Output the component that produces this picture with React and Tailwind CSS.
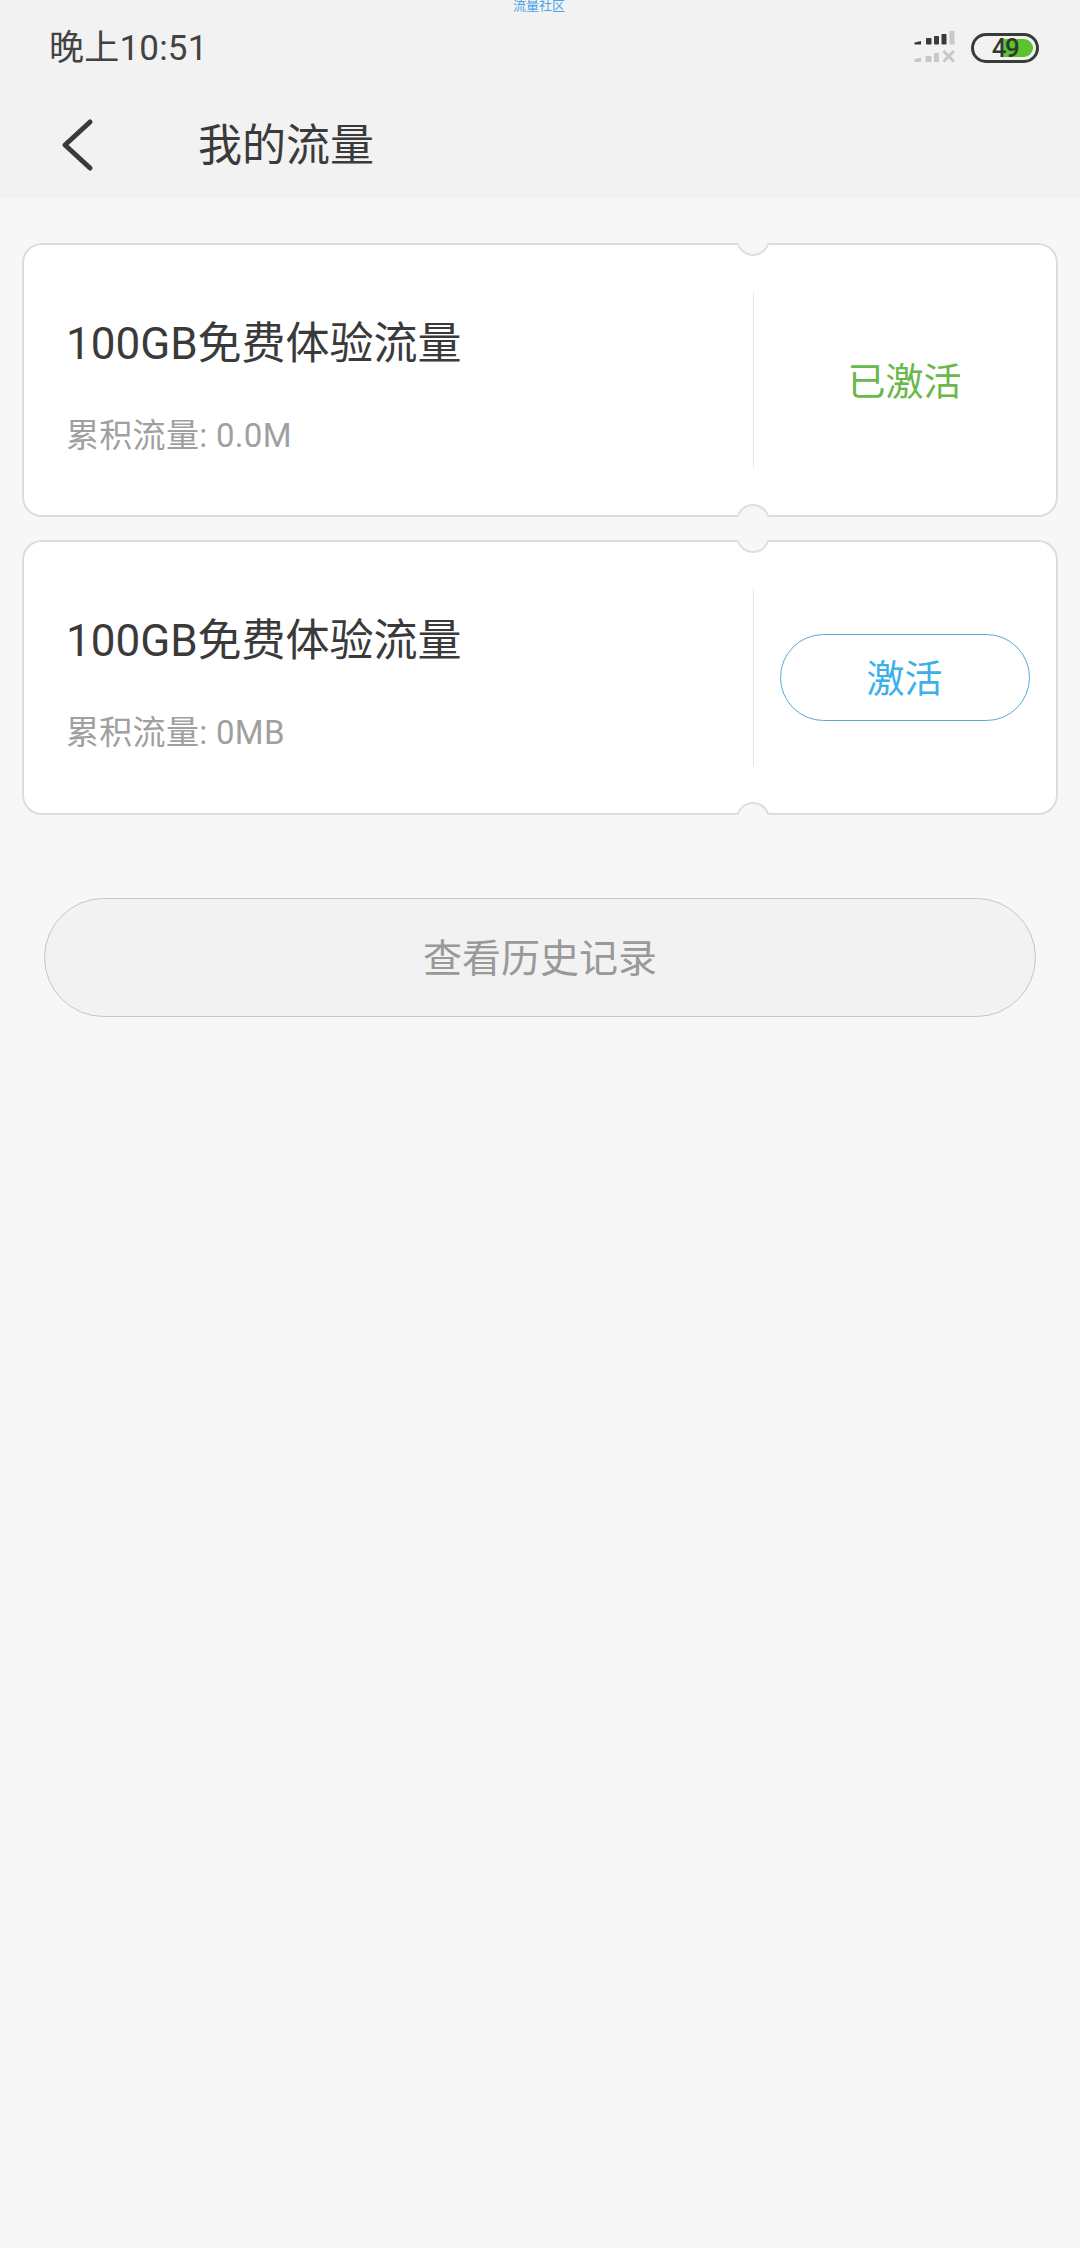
const fontStack = "font-['Roboto','Noto_Sans_CJK_SC',sans-serif]";

function SignalIcon() {
  return (
    <svg width="42" height="34" viewBox="0 0 42 34" fill="none">
      <path d="M0.5 11.5 L7 10 V13.5 H0.5 Z" fill="#3a3a3a" />
      <rect x="12" y="7" width="5.5" height="6.5" rx="0.8" fill="#3a3a3a" />
      <rect x="20" y="5" width="5" height="8.5" rx="0.8" fill="#3a3a3a" />
      <rect x="27.5" y="3" width="5" height="10.5" rx="0.8" fill="#3a3a3a" />
      <rect x="35.5" y="0" width="5" height="13.5" fill="#c8c8c8" />
      <path d="M0.5 28 L7 26.5 V31 H0.5 Z" fill="#c8c8c8" />
      <rect x="11.5" y="25" width="6" height="6" fill="#c8c8c8" />
      <rect x="20" y="22" width="5" height="9" fill="#c8c8c8" />
      <path d="M29.5 20 L40 30.5 M40 20 L29.5 30.5" stroke="#c8c8c8" strokeWidth="3" />
    </svg>
  );
}

function Battery() {
  return (
    <div className="relative flex h-[30px] w-[68px] items-center justify-center overflow-hidden rounded-full border-[3px] border-[#3a3a3a]">
      <div className="absolute top-[3px] bottom-[3px] left-[30px] right-[3px] rounded-r-full bg-[#5cc22e]" />
      <span className="relative text-[26px] leading-none font-medium tracking-[-1.5px] text-[#2e3a2a]">49</span>
    </div>
  );
}

function Notch({ position }) {
  const place = position === 'top' ? 'top-[-21px]' : 'bottom-[-21px]';
  return (
    <div className={`absolute left-[714px] h-[34px] w-[34px] rounded-full border-2 border-[#dfdfdf] bg-[#f7f7f7] ${place}`} />
  );
}

function FlowCard({ height, usage, children }) {
  return (
    <div className={`relative mx-[22px] flex overflow-hidden rounded-[20px] bg-white shadow-[inset_0_0_0_2px_#dcdcdc] ${height}`}>
      <Notch position="top" />
      <Notch position="bottom" />
      <div className="flex w-[731px] flex-col pl-[44px]">
        <div className="mt-[71px] text-[44px] leading-[60px] text-[#3a3a3a]">100GB免费体验流量</div>
        <div className="mt-[40px] text-[33px] leading-[44px] tracking-[0.3px] text-[#a0a0a0]">累积流量: {usage}</div>
      </div>
      <div className="my-[49px] w-[1px] bg-[#e6e6e6]" />
      <div className="flex flex-1 items-center justify-center pt-[4px] pr-[3px]">{children}</div>
    </div>
  );
}

export default function App() {
  return (
    <div className={`relative min-h-[2248px] w-[1080px] bg-[#f7f7f7] ${fontStack}`}>
      <div className="absolute top-[-1px] left-[513px] text-[13px] leading-[14px] text-[#4aa3e8]">流量社区</div>

      <div className="h-[199px] bg-[#f2f2f2]">
        <div className="flex h-[96px] items-center justify-between pr-[41px] pl-[49px]">
          <span className="pt-[2px] text-[35px] tracking-[0.2px] text-[#424242]">晚上10:51</span>
          <div className="flex items-center gap-[15px]">
            <SignalIcon />
            <Battery />
          </div>
        </div>
        <div className="flex h-[100px] items-center pl-[61px]">
          <svg width="34" height="56" viewBox="0 0 34 56" fill="none">
            <path d="M29 4 L4 27 L29 50" stroke="#3a3a3a" strokeWidth="5" strokeLinecap="round" strokeLinejoin="round" />
          </svg>
          <h1 className="ml-[103px] text-[44px] font-normal text-[#3a3a3a]">我的流量</h1>
        </div>
      </div>

      <div className="flex flex-col gap-[23px] pt-[44px]">
        <FlowCard height="h-[274px]" usage="0.0M">
          <span className="text-[38px] text-[#68b84a]">已激活</span>
        </FlowCard>
        <FlowCard height="h-[275px]" usage="0MB">
          <button type="button" className="mb-[4px] flex h-[87px] w-[250px] items-center justify-center rounded-full border border-[#57a9d6] pt-[3px] text-[38px] text-[#3cb0ea]">
            激活
          </button>
        </FlowCard>
      </div>

      <button type="button" className="mx-[44px] mt-[83px] flex h-[119px] w-[992px] items-center justify-center rounded-full border border-[#c6c6c6] bg-[#f2f2f2] pt-[3px] text-[39px] text-[#999]">
        查看历史记录
      </button>
    </div>
  );
}
